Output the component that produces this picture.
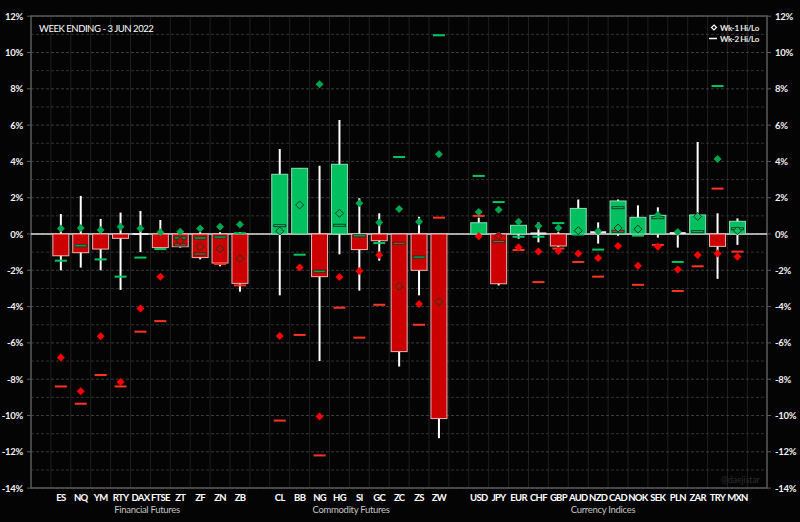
const PLOT = { left: 31, right: 767, top: 16, bottom: 488 };
const yOf = (v) => 234 - v * 18.15;
const xOf = (i) => PLOT.left + 19.9 * (i + 0.5);

// sym, slot, body, wick hi, wick lo, wk1 hi, wk2 hi, wk1 lo, wk2 lo
const rows = [
	['ES', 1, -1.2, 1.1, -2, 0.3, -1.47, -6.8, -8.4],
	['NQ', 2, -1.03, 2.1, -1.85, 0.33, -0.65, -8.67, -9.35],
	['YM', 3, -0.83, 0.83, -2, 0.22, -1.4, -5.64, -7.77],
	['RTY', 4, -0.24, 1.18, -3.08, 0.4, -2.35, -8.15, -8.4],
	['DAX', 5, 0, 1.27, -1, 0.3, -1.3, -4.1, -5.38],
	['FTSE', 6, -0.75, 0.77, -0.75, 0.1, -0.83, -2.35, -4.8],
	['ZT', 7, -0.7, 0.1, -0.75, 0.12, -0.22, -0.38, -0.6],
	['ZF', 8, -1.3, 0.1, -1.4, 0.3, -0.22, -0.7, -1.1],
	['ZN', 9, -1.6, 0.1, -1.78, 0.4, -0.17, -0.82, -1.65],
	['ZB', 10, -2.72, 0.1, -3.18, 0.53, 0.04, -1.36, -2.83],
	['CL', 12, 3.29, 4.68, -3.38, 0.16, 0.46, -5.62, -10.28],
	['BB', 13, 3.62, 3.62, 0, 1.6, -1.14, -1.85, -5.56],
	['NG', 14, -2.35, 3.76, -7, 8.25, -2.05, -10.05, -12.2],
	['HG', 15, 3.84, 6.28, -1.12, 1.14, 0.48, -2.37, -4.06],
	['SI', 16, -0.86, 1.97, -3.12, 1.69, -0.1, -2.04, -5.71],
	['GC', 17, -0.37, 1.14, -1.47, 0.64, -0.5, -1.16, -3.9],
	['ZC', 18, -6.48, 0, -7.3, 1.38, 4.24, -2.88, -0.51],
	['ZS', 19, -2, 0.95, -3.38, 0.68, -1.27, -3.86, -5],
	['ZW', 20, -10.17, 0, -11.25, 4.4, 10.95, -3.73, 0.9],
	['USD', 22, 0.62, 0.9, 0, 1.21, 3.2, -0.13, 1],
	['JPY', 23, -2.74, 0.1, -2.84, 1.34, 1.76, -0.1, -0.42],
	['EUR', 24, 0.48, 0.48, -0.26, 0.68, -0.15, -0.73, -0.88],
	['CHF', 25, 0.03, 0.64, -0.46, 0.44, -0.15, -0.97, -2.65],
	['GBP', 26, -0.66, 0.1, -0.72, 0.33, 0.6, -0.94, -0.8],
	['AUD', 27, 1.41, 1.9, 0, 0.18, -0.03, -1.08, -1.54],
	['NZD', 28, 0.1, 0.64, -0.53, 0.15, -0.86, -1.32, -2.35],
	['CAD', 29, 1.82, 1.9, -0.1, 0.33, 1.45, -0.66, 0.15],
	['NOK', 30, 0.92, 1.58, 0, 0.27, -0.09, -1.75, -2.8],
	['SEK', 31, 1.03, 1.47, -0.2, 1.05, 0.9, -0.7, -0.6],
	['PLN', 32, 0.05, 0.05, -0.75, 0.11, -1.54, -1.95, -3.14],
	['ZAR', 33, 1.05, 5.07, 0, 0.97, 0.13, -1.16, -1.78],
	['TRY', 34, -0.68, 1.14, -2.47, 4.13, 8.15, -1.08, 2.5],
	['MXN', 35, 0.7, 0.86, -0.6, 0.18, 0.29, -1.25, -0.97],
];

const levels = Array.from({ length: 27 }, (_, n) => 12 - n);
const majors = levels.filter((v) => v % 2 === 0);
const slots = Array.from({ length: 36 }, (_, n) => PLOT.left + 19.9 * (n + 1));
const isInside = (v, body) => (body > 0 ? v > 0 && v < body : v < 0 && v > body);

function Diamond({ x, v, up, body }) {
	const y = yOf(v);
	const inside = isInside(v, body) && Math.abs(body) > 0.2;
	const sameColour = up === body > 0;
	let fill = up ? 'fill-[#00a550]' : 'fill-[#ff0000]';
	if (inside && sameColour) fill = body > 0 ? 'fill-[#00c060]' : 'fill-[#cc0000]';
	return (
		<polygon
			points={`${x},${y - 4} ${x + 4},${y} ${x},${y + 4} ${x - 4},${y}`}
			className={`${fill} ${inside ? 'stroke-[#123d28]' : 'stroke-none'}`}
		/>
	);
}

function Dash({ x, v, up, body }) {
	const inside = isInside(v, body) && Math.abs(body) > 0.2;
	return (
		<rect
			x={x - 6}
			y={yOf(v) - 1}
			width={12}
			height={2}
			className={`${up ? 'fill-[#00c860]' : 'fill-[#ff3322]'} ${inside ? 'stroke-[#123d28]' : 'stroke-none'}`}
		/>
	);
}

function Candle({ row }) {
	const [, slot, body, hi, lo, d1, d2, l1, l2] = row;
	const x = xOf(slot);
	const top = Math.min(yOf(body), yOf(0));
	const height = Math.abs(yOf(body) - yOf(0));
	return (
		<g>
			<line x1={x} x2={x} y1={yOf(hi)} y2={yOf(lo)} strokeWidth={2} className="stroke-white" />
			{height > 2 && (
				<rect
					x={x - 8}
					y={top}
					width={16}
					height={height}
					strokeWidth={1}
					className={body > 0 ? 'fill-[#00c060] stroke-[#8fdcb4]' : 'fill-[#cc0000] stroke-[#eeb4b4]'}
				/>
			)}
			{height <= 2 && <line x1={x - 8} x2={x + 8} y1={yOf(body)} y2={yOf(body)} strokeWidth={2} className="stroke-[#e8e8e8]" />}
			<Dash x={x} v={d2} up body={body} />
			<Dash x={x} v={l2} up={false} body={body} />
			<Diamond x={x} v={d1} up body={body} />
			<Diamond x={x} v={l1} up={false} body={body} />
		</g>
	);
}

const groups = [
	['Financial Futures', 147],
	['Commodity Futures', 351],
	['Currency Indices', 603],
];

export default function App() {
	return (
		<div className="w-[800px] h-[522px] bg-[#040404] overflow-hidden font-['Lato',sans-serif]">
			<svg viewBox="0 0 800 522" width="800" height="522" className="block">
				{slots.map((x) => (
					<line key={x} x1={x} x2={x} y1={PLOT.top} y2={PLOT.bottom} className="stroke-[#1f1f1f]" />
				))}
				{levels.map((v) => (
					<line
						key={v}
						x1={PLOT.left}
						x2={PLOT.right}
						y1={yOf(v)}
						y2={yOf(v)}
						strokeDasharray="3 2"
						className={v % 2 === 0 ? 'stroke-[#3c3c3c]' : 'stroke-[#323232]'}
					/>
				))}
				<rect
					x={PLOT.left}
					y={PLOT.top}
					width={PLOT.right - PLOT.left}
					height={PLOT.bottom - PLOT.top}
					strokeWidth={1.5}
					className="fill-none stroke-[#5a5a5a]"
				/>
				{majors.map((v) => (
					<g key={v}>
						<line x1={27} x2={PLOT.left} y1={yOf(v)} y2={yOf(v)} className="stroke-[#5a5a5a]" />
						<line x1={PLOT.right} x2={771} y1={yOf(v)} y2={yOf(v)} className="stroke-[#5a5a5a]" />
						<text x={23} y={yOf(v) + 3.5} textAnchor="end" className="fill-[#f2f2f2] text-[9.5px] font-bold tracking-[-0.3px]">
							{v}%
						</text>
						<text x={775} y={yOf(v) + 3.5} className="fill-[#f2f2f2] text-[9.5px] font-bold tracking-[-0.3px]">
							{v}%
						</text>
					</g>
				))}
				<line x1={PLOT.left} x2={PLOT.right} y1={yOf(0)} y2={yOf(0)} strokeWidth={1.5} className="stroke-[#dcdcdc]" />
				{rows.map((row) => (
					<Candle key={row[0]} row={row} />
				))}
				{rows.map((row) => (
					<text key={row[0]} x={xOf(row[1])} y={501} textAnchor="middle" className="fill-white text-[9.5px] font-bold tracking-[-0.7px]">
						{row[0]}
					</text>
				))}
				{groups.map(([label, x]) => (
					<text key={label} x={x} y={513} textAnchor="middle" className="fill-[#c4c4c4] text-[9.5px] tracking-[-0.3px]">
						{label}
					</text>
				))}
				<text x={39} y={32} className="fill-white text-[9.5px] tracking-[-0.45px]">
					WEEK ENDING - 3 JUN 2022
				</text>
				<polygon points="714,25 716.5,27.5 714,30 711.5,27.5" strokeWidth={1.2} className="fill-none stroke-white" />
				<text x={720} y={31} className="fill-[#e8e8e8] text-[8px] font-bold tracking-[-0.35px]">
					Wk-1 Hi/Lo
				</text>
				<line x1={709} x2={717} y1={38.5} y2={38.5} strokeWidth={1.5} className="stroke-white" />
				<text x={720} y={42} className="fill-[#e8e8e8] text-[8px] font-bold tracking-[-0.35px]">
					Wk-2 Hi/Lo
				</text>
				<text x={721} y={483} className="fill-[#2e2e2e] text-[8.5px]">
					@daejistar
				</text>
			</svg>
		</div>
	);
}
